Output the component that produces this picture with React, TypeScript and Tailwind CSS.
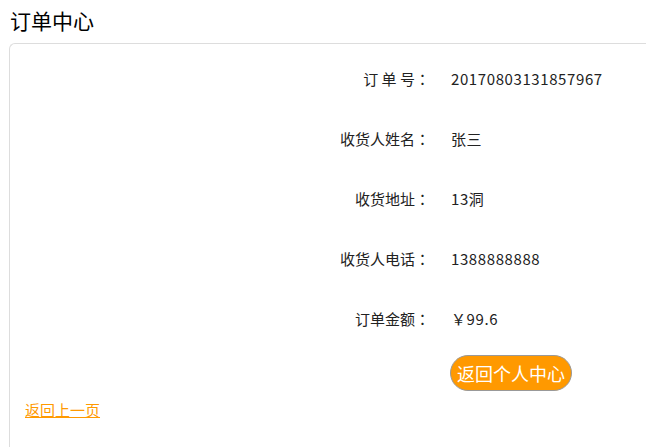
import React from "react";

const rows: { label: string; value: string }[] = [
  { label: "订 单 号", value: "20170803131857967" },
  { label: "收货人姓名", value: "张三" },
  { label: "收货地址", value: "13洞" },
  { label: "收货人电话", value: "1388888888" },
  { label: "订单金额", value: "￥99.6" },
];

function App() {
  return (
    <div
      className="min-h-[447px] bg-white text-[#222]"
      style={{ fontFamily: '"Noto Sans CJK SC", "Noto Sans", sans-serif' }}
    >
      <h1 className="pl-[10px] pt-[6px] h-[43px] text-[21px] leading-[28px] font-normal text-black">
        订单中心
      </h1>
      <div className="ml-[9px] min-h-[404px] border-l border-t border-[#ddd] rounded-tl-[6px] pt-[5px]">
        {rows.map((r) => (
          <div key={r.label} className="flex items-center h-[60px] text-[15px]">
            <span className="w-[420px] text-right">
              {r.label}
              <span style={{ fontFamily: '"Noto Sans CJK TC", sans-serif' }}>：</span>
            </span>
            <span className="pl-[21px] tracking-[0.6px]">{r.value}</span>
          </div>
        ))}
        <div className="pl-[440px] pt-[6px]">
          <button className="h-[36px] px-[6px] rounded-full bg-[#ff9900] border border-[#999] text-white text-[18px] leading-[34px]">
            返回个人中心
          </button>
        </div>
        <a
          href="#"
          className="block ml-[15px] mt-[8px] text-[15px] leading-[22px] text-[#ff9900] underline"
        >
          返回上一页
        </a>
      </div>
    </div>
  );
}

export default App;
